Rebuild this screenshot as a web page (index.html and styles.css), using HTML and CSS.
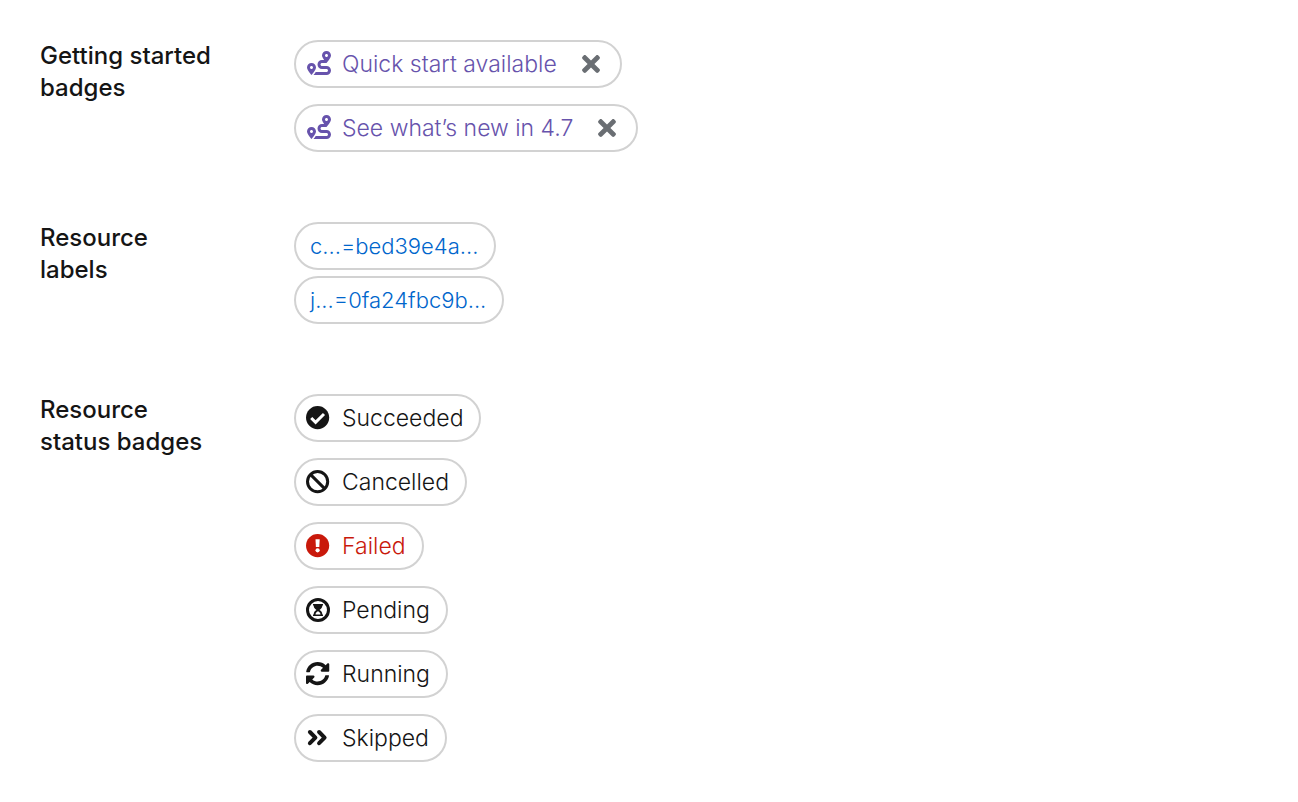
FILE: index.html
```html
<!DOCTYPE html>
<html lang="en">
<head>
<meta charset="utf-8">
<title>Label badges</title>
<link rel="stylesheet" href="styles.css">
</head>
<body>
<svg class="sprite" aria-hidden="true">
  <symbol id="route" viewBox="0 0 512 512"><path d="M416 320h-96c-17.600 0-32-14.400-32-32s14.400-32 32-32h96s96-107 96-160-43-96-96-96-96 43-96 96c0 25.500 22.200 63.400 45.300 96H320c-52.900 0-96 43.100-96 96s43.100 96 96 96h96c17.600 0 32 14.400 32 32s-14.400 32-32 32H185.500c-16 24.800-33.800 47.700-47.300 64H416c52.900 0 96-43.100 96-96s-43.100-96-96-96zm0-256c17.700 0 32 14.300 32 32s-14.300 32-32 32-32-14.300-32-32 14.300-32 32-32zM96 256c-53 0-96 43-96 96s96 160 96 160 96-107 96-160-43-96-96-96zm0 128c-17.700 0-32-14.300-32-32s14.300-32 32-32 32 14.300 32 32-14.300 32-32 32z"/></symbol>
  <symbol id="times" viewBox="0 0 352 512"><path d="M242.720 256l100.070-100.070c12.280-12.280 12.280-32.190 0-44.480l-22.240-22.240c-12.280-12.280-32.190-12.280-44.480 0L176 189.280 75.930 89.210c-12.280-12.280-32.190-12.280-44.480 0L9.210 111.450c-12.280 12.280-12.280 32.190 0 44.480L109.280 256 9.210 356.070c-12.280 12.280-12.280 32.190 0 44.480l22.240 22.240c12.280 12.280 32.200 12.280 44.480 0L176 322.720l100.070 100.070c12.280 12.280 32.200 12.280 44.480 0l22.240-22.240c12.280-12.280 12.280-32.190 0-44.480L242.720 256z"/></symbol>
</svg>
<main class="page">
  <section class="group">
    <h2 class="title">Getting started<br>badges</h2>
    <ul class="badges">
      <li class="badge info"><svg class="icon"><use href="#route"/></svg><a class="text" href="#quick-start">Quick start available</a><button class="close" type="button" aria-label="Dismiss quick start"><svg class="cross"><use href="#times"/></svg></button></li>
      <li class="badge info"><svg class="icon"><use href="#route"/></svg><a class="text" href="#whats-new">See what’s new in 4.7</a><button class="close" type="button" aria-label="Dismiss what’s new"><svg class="cross"><use href="#times"/></svg></button></li>
    </ul>
  </section>
  <section class="group">
    <h2 class="title">Resource<br>labels</h2>
    <ul class="badges tight">
      <li class="badge link"><a class="text" href="#c">c...=bed39e4a...</a></li>
      <li class="badge link"><a class="text" href="#j">j...=0fa24fbc9b...</a></li>
    </ul>
  </section>
  <section class="group">
    <h2 class="title">Resource<br>status badges</h2>
    <ul class="badges">
      <li class="badge"><svg class="icon" viewBox="0 0 24 24"><circle cx="11.600" cy="11.600" r="11.600"/><path class="mark" d="M5.200 12l4.400 4.400 8.400-8.400"/></svg><span class="text">Succeeded</span></li>
      <li class="badge"><svg class="icon line" viewBox="0 0 24 24"><circle cx="11.600" cy="11.600" r="10.100"/><path d="M4.600 4.600l14 14"/></svg><span class="text">Cancelled</span></li>
      <li class="badge danger"><svg class="icon" viewBox="0 0 24 24"><circle cx="11.600" cy="11.600" r="11.600"/><path fill="#fff" d="M9.500 5.300h4.200l-.4 7.800H9.900z"/><circle fill="#fff" cx="11.600" cy="16.300" r="2.100"/></svg><span class="text">Failed</span></li>
      <li class="badge"><svg class="icon" viewBox="0 0 24 24"><circle class="ring" cx="12" cy="12" r="10.500"/><path fill-rule="evenodd" d="M7 6h10v1.600h-.7c0 2-1 3.400-2.800 4.400 1.800 1 2.800 2.400 2.800 4.400h.7V18H7v-1.600h.7c0-2 1-3.400 2.800-4.400-1.800-1-2.800-2.400-2.800-4.400H7zM9.500 16.400h5c-.2-1.400-1.100-2.500-2.500-3.100-1.400.6-2.300 1.700-2.500 3.100z"/></svg><span class="text">Pending</span></li>
      <li class="badge"><svg class="icon" viewBox="8 8 512 512"><path d="M370.720 133.280C339.458 104.008 298.888 87.962 255.848 88c-77.458.068-144.328 53.178-162.791 126.850-1.344 5.363-6.122 9.150-11.651 9.150H24.103c-7.498 0-13.194-6.807-11.807-14.176C33.933 94.924 134.813 8 256 8c66.448 0 126.791 26.136 171.315 68.685L463.030 40.970C478.149 25.851 504 36.559 504 57.941V192c0 13.255-10.745 24-24 24H345.941c-21.382 0-32.090-25.851-16.971-40.971l41.750-41.749zM32 296h134.059c21.382 0 32.090 25.851 16.971 40.971l-41.750 41.750c31.262 29.273 71.835 45.319 114.876 45.280 77.418-.07 144.315-53.144 162.787-126.849 1.344-5.363 6.122-9.150 11.651-9.150h57.304c7.498 0 13.194 6.807 11.807 14.176C478.067 417.076 377.187 504 256 504c-66.448 0-126.791-26.136-171.315-68.685L48.970 471.030C33.851 486.149 8 475.441 8 454.059V320c0-13.255 10.745-24 24-24z"/></svg><span class="text">Running</span></li>
      <li class="badge"><svg class="icon line" viewBox="0 0 24 24"><path class="chevron" d="M3.900 6l5.500 5.600-5.500 5.600M13.100 6l5.500 5.600-5.500 5.600"/></svg><span class="text">Skipped</span></li>
    </ul>
  </section>
</main>
</body>
</html>
```
FILE: styles.css
```css
* { box-sizing: border-box; }
body {
  margin: 0;
  background: #fff;
  color: #151515;
  font-family: Inter, "Open Sans", sans-serif;
  font-size: 23px;
  line-height: 32px;
}
.sprite { display: none; }
.page {
  display: flex;
  flex-direction: column;
  gap: 70px;
  padding: 40px;
}
.group {
  display: grid;
  grid-template-columns: 254px 1fr;
}
.title {
  margin: 0;
  font-size: 24px;
  font-weight: 500;
}
.badges {
  display: flex;
  flex-direction: column;
  align-items: flex-start;
  gap: 16px;
  margin: 0;
  padding: 0;
  list-style: none;
}
.badges.tight { gap: 6px; }
.badge {
  display: flex;
  align-items: center;
  height: 48px;
  padding: 0 16px 0 10px;
  border: 2px solid #d2d2d2;
  border-radius: 24px;
  font-weight: 300;
}
.badge.info { padding-right: 20px; color: #6753ac; }
.badge.link { padding-left: 14px; color: #06c; font-size: 22px; }
.badge.danger { color: #c9190b; }
.text { color: inherit; text-decoration: none; white-space: nowrap; }
.icon {
  width: 24px;
  height: 24px;
  margin-right: 12px;
  fill: currentColor;
}
.info .icon { margin: 0 11px 2px 1px; }
.line, .ring { fill: none; stroke: currentColor; stroke-width: 3; }
.mark { fill: none; stroke: #fff; stroke-width: 3; }
.chevron { stroke-width: 4; stroke-linecap: round; stroke-linejoin: round; }
.close {
  display: flex;
  margin-left: 25px;
  padding: 0;
  border: 0;
  background: none;
  color: #6a6e73;
  cursor: pointer;
}
.cross { width: 18px; height: 26px; fill: currentColor; }
```
